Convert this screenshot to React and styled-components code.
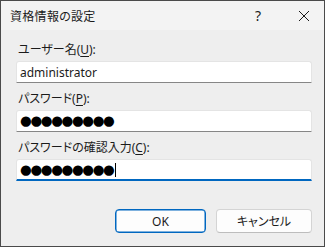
import React from 'react';
import styled, { createGlobalStyle } from 'styled-components';

const GlobalStyle = createGlobalStyle`
  html, body {
    margin: 0;
    padding: 0;
    background: #ffffff;
  }
  * {
    box-sizing: border-box;
  }
`;

const uiFont = `"Noto Sans", "Noto Sans CJK JP", sans-serif`;

const Window = styled.div`
  width: 325px;
  height: 247px;
  border: 1px solid #4a4a4a;
  background: #eeeeee;
  display: flex;
  flex-direction: column;
  font-family: ${uiFont};
  font-feature-settings: 'palt';
  color: #1b1b1b;
`;

const TitleBar = styled.div`
  height: 29px;
  flex: none;
  display: flex;
  align-items: center;
  padding-left: 9px;
  background: #f3f3f3;
`;

const Title = styled.div`
  flex: 1;
  font-size: 12px;
  letter-spacing: 0.3px;
`;

const TitleButton = styled.div`
  width: ${({ $w }) => $w}px;
  height: 29px;
  display: flex;
  align-items: center;
  justify-content: center;
  font-size: 14px;
  color: #1b1b1b;
`;

const Body = styled.div`
  flex: 1;
  display: flex;
  flex-direction: column;
  padding: 12px 12px 0 15px;
`;

const Label = styled.div`
  font-size: 12px;
  line-height: 16px;
  padding-left: 2px;
  margin-bottom: 3px;
`;

const Key = styled.span`
  text-decoration: underline;
  text-underline-offset: 2px;
`;

const Input = styled.div`
  height: 22px;
  display: flex;
  align-items: center;
  padding-left: 3px;
  background: #ffffff;
  border: 1px solid #e4e4e4;
  border-bottom: ${({ $focused }) => ($focused ? '2px solid #0067c0' : '1px solid #868686')};
  border-radius: 3px 3px 0 0;
  margin-bottom: 8px;
  font-size: 12px;
  overflow: hidden;
`;

const Dots = styled.span`
  font-family: "DejaVu Sans", sans-serif;
  font-size: 13.5px;
  letter-spacing: -1.4px;
  color: #000000;
  line-height: 1;
`;

const Caret = styled.span`
  display: inline-block;
  width: 1px;
  height: 14px;
  background: #000000;
  margin-left: 2px;
`;

const ButtonRow = styled.div`
  display: flex;
  justify-content: flex-end;
  gap: 10px;
  margin-top: 20px;
`;

const Button = styled.div`
  width: ${({ $w }) => $w}px;
  height: 24px;
  display: flex;
  align-items: center;
  justify-content: center;
  font-size: 12px;
  background: #fdfdfd;
  border: 1px solid ${({ $primary }) => ($primary ? '#0067c0' : '#d4d4d4')};
  border-bottom-color: ${({ $primary }) => ($primary ? '#0067c0' : '#bdbdbd')};
  border-radius: 4px;
  box-shadow: ${({ $primary }) => ($primary ? 'inset 0 0 0 0.5px #0067c0' : 'none')};
`;

const CloseIcon = () => (
  <svg width="12" height="12" viewBox="0 0 12 12">
    <path d="M1 1 L11 11 M11 1 L1 11" stroke="#1b1b1b" strokeWidth="1" fill="none" />
  </svg>
);

export default function App() {
  return (
    <>
      <GlobalStyle />
      <Window>
        <TitleBar>
          <Title>資格情報の設定</Title>
          <TitleButton $w={52}>?</TitleButton>
          <TitleButton $w={40}>
            <CloseIcon />
          </TitleButton>
        </TitleBar>
        <Body>
          <Label>
            ユーザー名(<Key>U</Key>):
          </Label>
          <Input>administrator</Input>
          <Label>
            パスワード(<Key>P</Key>):
          </Label>
          <Input>
            <Dots>●●●●●●●●●</Dots>
          </Input>
          <Label>
            パスワードの確認入力(<Key>C</Key>):
          </Label>
          <Input $focused>
            <Dots>●●●●●●●●●</Dots>
            <Caret />
          </Input>
          <ButtonRow>
            <Button $primary $w={91}>OK</Button>
            <Button $w={96}>キャンセル</Button>
          </ButtonRow>
        </Body>
      </Window>
    </>
  );
}
